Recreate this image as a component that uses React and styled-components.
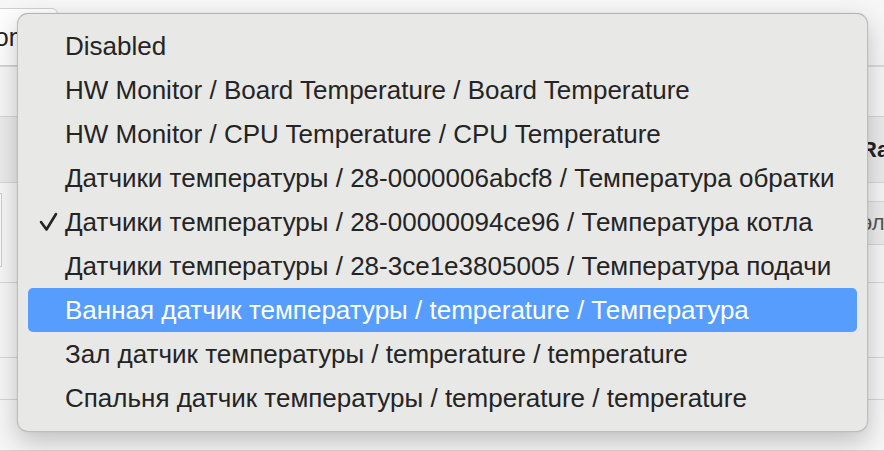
import React from "react";
import styled, { createGlobalStyle } from "styled-components";

const Global = createGlobalStyle`
  html, body { margin: 0; padding: 0; }
  body {
    width: 884px; height: 451px; overflow: hidden;
    background: #f6f6f6;
    font-family: "Liberation Sans", Arial, Helvetica, sans-serif;
  }
`;

const Page = styled.div`
  position: relative;
  width: 884px;
  height: 451px;
  display: flex;
  flex-direction: column;
  overflow: hidden;
`;

const TopBar = styled.div`
  height: 67px;
  display: flex;
  align-items: flex-start;
  padding-top: 8px;
  box-sizing: border-box;
  border-bottom: 2px solid #dadada;
`;

const SelectBox = styled.div`
  margin-left: -68px;
  width: 126px;
  height: 58px;
  box-sizing: border-box;
  background: #fdfdfd;
  border: 1px solid #cfcfcf;
  border-radius: 6px;
  display: flex;
  align-items: center;
  padding-left: 16px;
  font-size: 25px;
  color: #222;
`;

const Spacer = styled.div`
  height: ${(p) => p.$h}px;
  box-sizing: border-box;
  border-bottom: 1px solid #d6d6d6;
`;

const Row = styled.div`
  height: ${(p) => p.$h}px;
  box-sizing: border-box;
  border-bottom: 1px solid #d6d6d6;
  background: ${(p) => p.$bg || "transparent"};
  display: grid;
  grid-template-columns: 60px 1fr 30px;
`;

const HeadCell = styled.div`
  font-weight: bold;
  font-size: 22px;
  color: #222;
  white-space: nowrap;
  overflow: hidden;
  padding-left: 7px;
  align-self: center;
`;

const LeftInput = styled.div`
  margin: 10px 0 15px -60px;
  width: 62px;
  box-sizing: border-box;
  border: 1px solid #cdcdcd;
  background: #fbfbfb;
`;

const GreyCell = styled.div`
  margin: 18px 0 37px;
  background: #ececec;
  border-top: 1px solid #d6d6d6;
  border-bottom: 1px solid #d6d6d6;
  display: flex;
  align-items: center;
  padding-left: 7px;
  font-size: 22px;
  color: #555;
  white-space: nowrap;
  overflow: hidden;
`;

const Menu = styled.div`
  position: absolute;
  left: 17px;
  top: 13px;
  width: 851px;
  box-sizing: border-box;
  padding: 10px 10px 11px;
  background: #e8e8e6;
  border: 1px solid #bdbdbd;
  border-top-color: #b3b3b3;
  border-radius: 11px;
  box-shadow: 0 10px 26px rgba(0, 0, 0, 0.22), 0 0 2px rgba(0, 0, 0, 0.08);
  display: flex;
  flex-direction: column;
`;

const Item = styled.div`
  position: relative;
  height: 44px;
  display: flex;
  align-items: center;
  padding-left: 37px;
  border-radius: 5px;
  font-size: 26px;
  white-space: nowrap;
  color: ${(p) => (p.$active ? "#ffffff" : "#242424")};
  background: ${(p) => (p.$active ? "#569dfd" : "transparent")};
`;

const Check = styled.svg`
  position: absolute;
  left: 11px;
  top: 12px;
  width: 19px;
  height: 20px;
`;

const items = [
  "Disabled",
  "HW Monitor / Board Temperature / Board Temperature",
  "HW Monitor / CPU Temperature / CPU Temperature",
  "Датчики температуры / 28-0000006abcf8 / Температура обратки",
  "Датчики температуры / 28-00000094ce96 / Температура котла",
  "Датчики температуры / 28-3ce1e3805005 / Температура подачи",
  "Ванная датчик температуры / temperature / Температура",
  "Зал датчик температуры / temperature / temperature",
  "Спальня датчик температуры / temperature / temperature",
];

export default function App() {
  return (
    <>
      <Global />
      <Page>
        <TopBar>
          <SelectBox>Option</SelectBox>
        </TopBar>
        <Spacer $h={50} />
        <Row $h={66} $bg="#ebebeb">
          <div />
          <div />
          <HeadCell>Ra</HeadCell>
        </Row>
        <Row $h={100}>
          <LeftInput />
          <div />
          <GreyCell>эл</GreyCell>
        </Row>
        <Row $h={75} />
        <Row $h={42} />
        <Row $h={51} />
        <Menu>
          {items.map((t, i) => (
            <Item key={i} $active={i === 6}>
              {i === 4 && (
                <Check viewBox="0 0 19 20">
                  <polyline
                    points="2,10 7.5,17.5 17,2"
                    fill="none"
                    stroke="#242424"
                    strokeWidth="2.6"
                    strokeLinecap="round"
                    strokeLinejoin="round"
                  />
                </Check>
              )}
              {t}
            </Item>
          ))}
        </Menu>
      </Page>
    </>
  );
}
